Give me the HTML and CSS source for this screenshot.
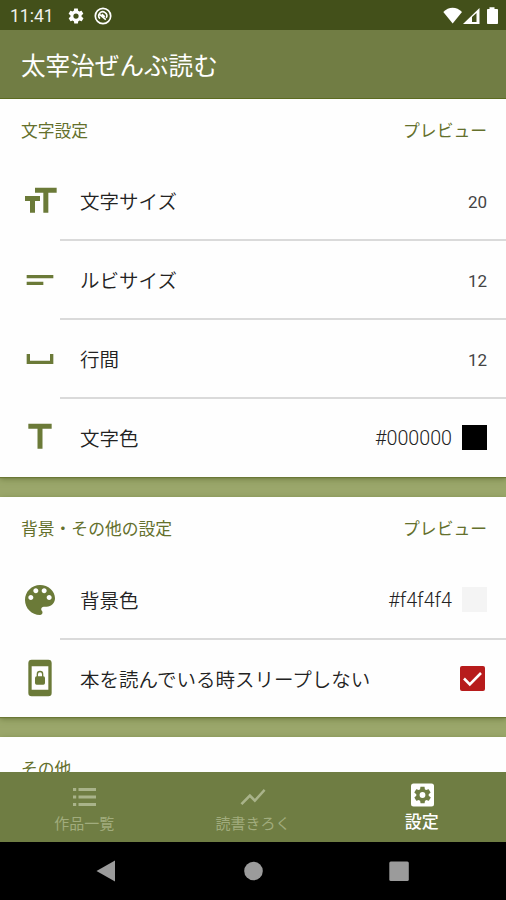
FILE: index.html
```html
<!DOCTYPE html>
<html lang="ja">
<head>
<meta charset="utf-8">
<title>太宰治ぜんぶ読む</title>
<link rel="stylesheet" href="styles.css">
</head>
<body>
<div class="screen">
  <div class="status">
    <span class="clock">11:41</span>
    <svg class="s-gear" viewBox="0 0 24 24"><path fill-rule="evenodd" d="M19.4 13c0-.3.1-.6.1-1s0-.7-.1-1l2.100-1.600c.2-.2.2-.4.1-.6l-2-3.500c-.1-.2-.4-.3-.6-.2l-2.500 1c-.5-.4-1.100-.7-1.700-1L14.500 2.400c0-.2-.2-.4-.5-.4h-4c-.2 0-.5.2-.5.4l-.4 2.700c-.6.3-1.200.6-1.700 1l-2.500-1c-.2-.1-.5 0-.6.2l-2 3.500c-.1.2-.1.500.1.600L4.600 11c0 .3-.1.7-.1 1s0 .7.1 1l-2.100 1.600c-.2.2-.2.400-.1.600l2 3.500c.1.200.4.300.6.200l2.500-1c.5.400 1.100.7 1.700 1l.4 2.700c0 .2.200.4.5.4h4c.2 0 .5-.2.5-.4l.4-2.700c.6-.3 1.200-.6 1.700-1l2.500 1c.2.100.5 0 .6-.2l2-3.500c.1-.2.1-.5-.1-.6L19.400 13zM12 15.500a3.500 3.500 0 1 1 0-7 3.500 3.500 0 0 1 0 7z"/></svg>
    <svg class="s-sync" viewBox="0 0 18 18"><circle cx="9" cy="9" r="7.700" fill="none" stroke="#fff" stroke-width="1.700"/><path d="M6 11.700a4 4 0 1 1 6.200-.8M5.500 7.300l6.300 5.300M7.800 7.200l3 2.600" fill="none" stroke="#fff" stroke-width="1.600"/></svg>
    <svg class="s-right" viewBox="0 0 56 18"><path d="M.3 5C5.500-.8 13.700-.8 19 5l-9.300 11.500z"/><path fill-rule="evenodd" d="M20 17 36.500 1v16zM29 15h4.500V6L29 10z"/><path d="M46.500.3h5v1.600h2.700q.8 0 .8.800v13.600q0 .8-.8.800h-9.400q-.8 0-.8-.8V2.700q0-.8.800-.8h1.700z"/></svg>
  </div>
  <header class="appbar">太宰治ぜんぶ読む</header>
  <main class="content">
    <section class="card">
      <div class="head"><h2>文字設定</h2><span class="preview">プレビュー</span></div>
      <div class="row">
        <svg class="icon" viewBox="0 0 24 24"><path d="M9 4v3h5v12h3V7h5V4H9zm-6 8h3v7h3v-7h3V9H3v3z"/></svg>
        <div class="body"><span class="label">文字サイズ</span><span class="num">20</span></div>
      </div>
      <div class="row">
        <svg class="icon" viewBox="0 0 24 24"><path d="M4 9h16v2H4zM4 13h10v2H4z"/></svg>
        <div class="body"><span class="label">ルビサイズ</span><span class="num">12</span></div>
      </div>
      <div class="row">
        <svg class="icon" viewBox="0 0 24 24"><path d="M18 9v4H6V9H4v6h16V9z"/></svg>
        <div class="body"><span class="label">行間</span><span class="num">12</span></div>
      </div>
      <div class="row">
        <svg class="icon" viewBox="0 0 24 24"><path d="M5 4v3h5.500v12h3V7H19V4z"/></svg>
        <div class="body"><span class="label">文字色</span><span class="hex">#000000</span><i class="swatch black"></i></div>
      </div>
    </section>
    <section class="card second">
      <div class="head"><h2>背景・その他の設定</h2><span class="preview">プレビュー</span></div>
      <div class="row">
        <svg class="icon" viewBox="0 0 24 24"><path d="M12 3c-4.970 0-9 4.030-9 9s4.030 9 9 9c.83 0 1.500-.67 1.500-1.500 0-.39-.15-.74-.39-1.010-.23-.26-.38-.61-.38-.99 0-.83.67-1.500 1.500-1.500H16c2.760 0 5-2.240 5-5 0-4.420-4.030-8-9-8zm-5.500 9c-.83 0-1.500-.67-1.500-1.500S5.670 9 6.500 9 8 9.670 8 10.500 7.330 12 6.500 12zm3-4C8.670 8 8 7.330 8 6.500S8.670 5 9.500 5s1.500.67 1.500 1.500S10.330 8 9.500 8zm5 0c-.83 0-1.500-.67-1.500-1.500S13.670 5 14.500 5s1.500.67 1.500 1.500S15.330 8 14.500 8zm3 4c-.83 0-1.500-.67-1.500-1.500S16.670 9 17.500 9s1.500.67 1.500 1.500-.67 1.500-1.500 1.500z"/></svg>
        <div class="body"><span class="label">背景色</span><span class="hex">#f4f4f4</span><i class="swatch pale"></i></div>
      </div>
      <div class="row">
        <svg class="icon" viewBox="0 0 24 24"><path fill-rule="evenodd" d="M7 1h10a2 2 0 0 1 2 2v18a2 2 0 0 1-2 2H7a2 2 0 0 1-2-2V3a2 2 0 0 1 2-2zM7 5v14h10V5z"/><path fill-rule="evenodd" d="M10.800 11h2.400v-1.300a1.200 1.200 0 0 0-2.400 0zM10 11V9.700a2 2 0 0 1 4 0V11q1 0 1 1v3q0 1-1 1h-4q-1 0-1-1v-3q0-1 1-1z"/></svg>
        <div class="body"><span class="label">本を読んでいる時スリープしない</span><svg class="check" viewBox="0 0 25 25"><rect width="25" height="25" rx="2" fill="#b71c1c"/><path d="m4 12.500 5.800 5.800L21 7" fill="none" stroke="#fff" stroke-width="2.600"/></svg></div>
      </div>
    </section>
    <section class="card last">
      <div class="head"><h2>その他</h2></div>
    </section>
  </main>
  <nav class="tabs">
    <div class="tab">
      <svg class="tab-icon" viewBox="0 0 30 30"><path d="M4 6h3.200v3H4zM9.500 6H27v3H9.500zM4 13.500h3.200v3H4zM9.500 13.500H27v3H9.500zM4 21h3.200v3H4zM9.500 21H27v3H9.500z"/></svg>
      <span>作品一覧</span>
    </div>
    <div class="tab">
      <svg class="tab-icon" viewBox="0 0 24 24"><path d="m3.500 18.490 6-6.010 4 4L22 6.920l-1.410-1.410-7.090 7.970-4-4L2 16.990z"/></svg>
      <span>読書きろく</span>
    </div>
    <div class="tab active">
      <svg class="tab-icon" viewBox="0 0 30 30"><rect x="4" y="3.500" width="23" height="23" rx="2.500"/><g transform="translate(5.500 5) scale(.833)"><path fill="#6f7d43" fill-rule="evenodd" d="M19.400 13c0-.3.1-.6.1-1s0-.7-.1-1l2.100-1.600c.2-.2.2-.4.1-.6l-2-3.500c-.1-.2-.4-.3-.6-.2l-2.500 1c-.5-.4-1.100-.7-1.700-1L14.500 2.400c0-.2-.2-.4-.5-.4h-4c-.2 0-.5.2-.5.4l-.4 2.700c-.6.3-1.200.6-1.700 1l-2.500-1c-.2-.1-.5 0-.6.2l-2 3.500c-.1.2-.1.500.1.600L4.600 11c0 .3-.1.7-.1 1s0 .7.1 1l-2.100 1.600c-.2.2-.2.400-.1.600l2 3.500c.1.200.4.300.6.200l2.500-1c.5.400 1.100.7 1.700 1l.4 2.700c0 .2.200.4.5.4h4c.2 0 .5-.2.5-.4l.4-2.700c.6-.3 1.200-.6 1.700-1l2.500 1c.2.100.5 0 .6-.2l2-3.500c.1-.2.1-.5-.1-.6L19.400 13zM12 15.500a3.500 3.500 0 1 1 0-7 3.500 3.500 0 0 1 0 7z"/></g></svg>
      <span>設定</span>
    </div>
  </nav>
  <div class="sysnav">
    <svg viewBox="0 0 506 58"><path d="M96.500 29 115 18.500v21z"/><circle cx="253.500" cy="29" r="9.300"/><rect x="389.300" y="19.500" width="19.500" height="19.500" rx="1.500"/></svg>
  </div>
</div>
</body>
</html>
```
FILE: styles.css
```css
* { box-sizing: border-box; }
body {
  margin: 0;
  font-family: Roboto, "Noto Sans CJK JP", sans-serif;
  color: #222;
}
svg { display: block; flex: none; }
.screen {
  width: 506px;
  height: 900px;
  display: flex;
  flex-direction: column;
  overflow: hidden;
}
.status {
  height: 30px;
  flex: none;
  background: #43501a;
  display: flex;
  align-items: center;
  padding: 1px 7px 0 10px;
  color: #fff;
  fill: #fff;
}
.clock { width: 57px; font-size: 17.500px; font-weight: 400; opacity: .92; }
.s-gear { width: 18px; height: 18px; }
.s-sync { width: 18px; height: 18px; margin-left: 9px; }
.s-right { width: 56px; height: 18px; margin-left: auto; }
.appbar {
  height: 69px;
  flex: none;
  background: #717d44;
  border-bottom: 1px solid #5c6b20;
  color: #fff;
  font-family: "Noto Sans CJK JP", sans-serif;
  font-size: 24.600px;
  line-height: 68px;
  padding-left: 21px;
}
.content { flex: 1; min-height: 0; overflow: hidden; background: #9ba76b; }
.card {
  height: 378px;
  background: #fefefe;
  margin-bottom: 20px;
  box-shadow: 0 1px 1px #6b7836, 0 2px 6px rgba(70, 85, 25, .5);
}
.second { height: 220px; }
.head {
  height: 63px;
  display: flex;
  justify-content: space-between;
  align-items: center;
  padding: 0 19px 1px 21px;
  color: #64702c;
  font-size: 16.800px;
  font-weight: 400;
  font-family: "Noto Sans CJK JP", sans-serif;
}
.second .head { height: 64px; padding-bottom: 2px; }
.head h2 { margin: 0; font-size: inherit; font-weight: inherit; }
.row { height: 79px; display: flex; align-items: center; padding-left: 20px; }
.row:last-child { height: 78px; }
.icon { width: 40px; height: 40px; fill: #6b7a38; margin-bottom: 2px; }
.body {
  flex: 1;
  height: 79px;
  display: flex;
  align-items: center;
  padding: 0 19px 0 20px;
  border-bottom: 2px solid #dadada;
}
.row:last-child .body { border-bottom-color: transparent; }
.label {
  flex: 1;
  font-family: "Noto Sans CJK JP", sans-serif;
  font-size: 19.500px;
  font-weight: 350;
}
.num { font-size: 17px; color: #444; padding-top: 2px; }
.hex { font-size: 19.700px; font-weight: 350; padding-top: 2px; }
.swatch { width: 25px; height: 25px; margin-left: 10px; }
.black { background: #000; }
.pale { background: #f4f4f4; }
.check { width: 25px; height: 25px; margin-right: 2px; }
.tabs {
  height: 70px;
  flex: none;
  background: #6f7d43;
  display: flex;
  font-family: "Noto Sans CJK JP", sans-serif;
}
.tab {
  flex: 1;
  display: flex;
  flex-direction: column;
  align-items: center;
  padding-top: 10px;
  color: #a1ac7d;
  fill: #a9b38a;
  font-size: 15px;
  line-height: 22px;
}
.tab-icon { width: 30px; height: 30px; }
.active { padding-top: 8px; color: #fff; fill: #fff; font-size: 17px; font-weight: 500; }
.sysnav { height: 58px; flex: none; background: #000; fill: #9b9b9b; }
```
